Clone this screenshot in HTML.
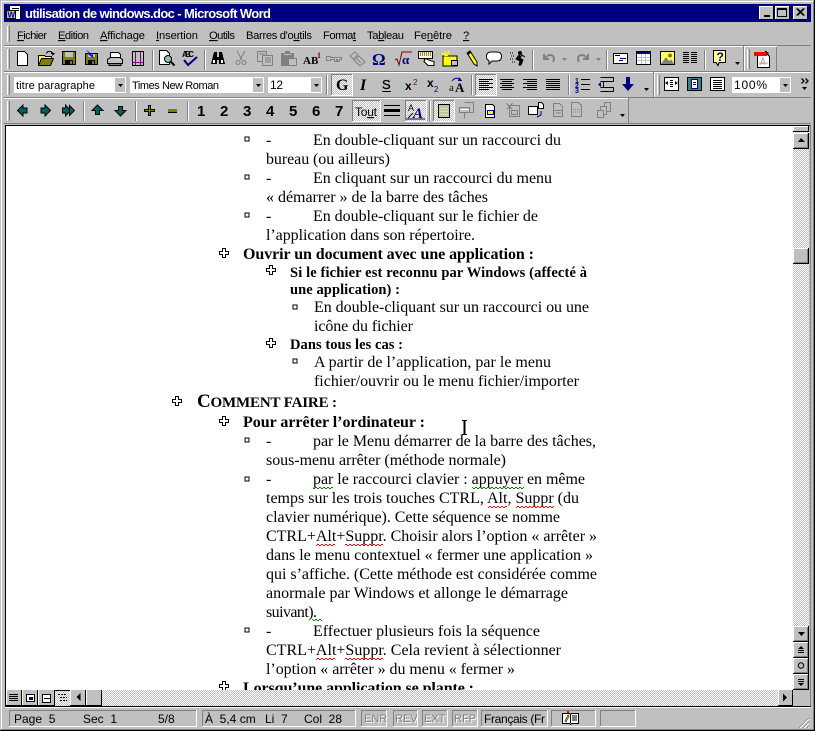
<!DOCTYPE html>
<html><head><meta charset="utf-8"><title>utilisation de windows.doc - Microsoft Word</title>
<style>
html,body{margin:0;padding:0;background:#c0c0c0;overflow:hidden}
svg{display:block}
text{white-space:pre}
.m{font:11.2px "Liberation Sans",sans-serif;fill:#000}
.u{text-decoration:underline}
.d{font:16px "Liberation Serif",serif;fill:#000}
.b{font:bold 16px "Liberation Serif",serif;fill:#000}
.c{font:bold 14.5px "Liberation Serif",serif;fill:#000}
.s{font:12px "Liberation Sans",sans-serif;fill:#000}
.f{font:11px "Liberation Sans",sans-serif;fill:#000}
.g{font:11px "Liberation Sans",sans-serif;fill:#808080}
.gw{font:11px "Liberation Sans",sans-serif;fill:#fff}
.n{font:bold 15px "Liberation Sans",sans-serif;fill:#000}
</style></head><body>
<svg xmlns="http://www.w3.org/2000/svg" width="815" height="731" viewBox="0 0 815 731" shape-rendering="crispEdges">
<defs>
<pattern id="dw" width="2" height="2" patternUnits="userSpaceOnUse"><rect width="2" height="2" fill="#c0c0c0"/><rect width="1" height="1" fill="#fff"/><rect x="1" y="1" width="1" height="1" fill="#fff"/></pattern>
<pattern id="zr" width="4" height="2" patternUnits="userSpaceOnUse"><rect x="0" y="1" width="1" height="1" fill="#f00"/><rect x="1" y="0" width="2" height="1" fill="#f00"/><rect x="3" y="1" width="1" height="1" fill="#f00"/></pattern>
<pattern id="zg" width="4" height="2" patternUnits="userSpaceOnUse"><rect x="0" y="1" width="1" height="1" fill="#080"/><rect x="1" y="0" width="2" height="1" fill="#080"/><rect x="3" y="1" width="1" height="1" fill="#080"/></pattern>
<path id="plus" d="M-1.5-4.5h3v3h3v3h-3v3h-3v-3h-3v-3h3z" fill="#fff" stroke="#000"/>
<rect id="sq" x="-2" y="-2" width="4" height="4" fill="#fff" stroke="#000"/>
<path id="ar" d="M0 0h5l-2.500 3z" fill="#000" shape-rendering="auto"/>
</defs>
<rect width="815" height="731" fill="#c0c0c0"/>
<rect x="1" y="1" width="812" height="1" fill="#fff"/><rect x="1" y="1" width="1" height="728" fill="#fff"/>
<rect x="813" y="1" width="1" height="729" fill="#808080"/><rect x="1" y="729" width="813" height="1" fill="#808080"/>
<rect x="814" width="1" height="731" fill="#000"/><rect y="730" width="815" height="1" fill="#000"/>

<!-- title bar -->
<rect x="4" y="4" width="807" height="18" fill="#000080"/>
<g transform="translate(6,5)"><rect x="3.500" y=".5" width="11" height="14" fill="#fff" stroke="#000"/><rect x="6" y="3" width="7" height="1" fill="#000"/><rect x="6" y="5" width="7" height="1" fill="#000"/><rect x=".5" y="5.500" width="9" height="8" fill="#c0c0c0" stroke="#000"/><text x="1.500" y="12.500" font-family="Liberation Sans" font-size="8" font-weight="bold" fill="#000080">W</text></g>
<text x="25" y="18" font-family="Liberation Sans" font-weight="bold" font-size="13" fill="#fff" textLength="246">utilisation de windows.doc - Microsoft Word</text>
<g id="wb">
<rect x="759" y="6" width="15" height="14" fill="#c0c0c0"/><rect x="759" y="6" width="15" height="1" fill="#fff"/><rect x="759" y="6" width="1" height="14" fill="#fff"/><rect x="759" y="19" width="15" height="1" fill="#000"/><rect x="773" y="6" width="1" height="14" fill="#000"/><rect x="764" y="15" width="6" height="2" fill="#000"/>
<rect x="775" y="6" width="15" height="14" fill="#c0c0c0"/><rect x="775" y="6" width="15" height="1" fill="#fff"/><rect x="775" y="6" width="1" height="14" fill="#fff"/><rect x="775" y="19" width="15" height="1" fill="#000"/><rect x="789" y="6" width="1" height="14" fill="#000"/><rect x="777.500" y="8.500" width="9" height="8" fill="none" stroke="#000"/><rect x="777" y="8" width="10" height="2" fill="#000"/>
<rect x="793" y="6" width="15" height="14" fill="#c0c0c0"/><rect x="793" y="6" width="15" height="1" fill="#fff"/><rect x="793" y="6" width="1" height="14" fill="#fff"/><rect x="793" y="19" width="15" height="1" fill="#000"/><rect x="807" y="6" width="1" height="14" fill="#000"/><path d="M796.500 8.500l7 7M797.500 8.500l7 7M803.500 8.500l-7 7M804.500 8.500l-7 7" stroke="#000" shape-rendering="auto"/>
</g>

<!-- bevels -->
<rect x="4" y="22" width="807" height="1" fill="#c0c0c0"/>
<rect x="4" y="45" width="807" height="1" fill="#808080"/><rect x="4" y="46" width="807" height="1" fill="#fff"/>
<rect x="4" y="71" width="807" height="1" fill="#808080"/><rect x="4" y="72" width="807" height="1" fill="#fff"/>
<rect x="4" y="97" width="807" height="1" fill="#808080"/><rect x="4" y="98" width="624" height="1" fill="#fff"/>
<rect x="4" y="123" width="807" height="1" fill="#808080"/>
<rect x="743" y="46" width="1" height="25" fill="#808080"/><rect x="744" y="47" width="1" height="24" fill="#fff"/>
<rect x="776" y="47" width="1" height="24" fill="#808080"/><rect x="777" y="46" width="34" height="25" fill="#c0c0c0"/><rect x="777" y="45" width="34" height="1" fill="#808080"/><rect x="777" y="46" width="34" height="1" fill="#c0c0c0"/>
<rect x="653" y="72" width="1" height="25" fill="#808080"/><rect x="654" y="73" width="1" height="24" fill="#fff"/>
<rect x="628" y="98" width="1" height="25" fill="#808080"/>
<!-- grippers -->
<g fill="#fff"><rect x="7" y="26" width="1" height="16"/><rect x="7" y="49" width="1" height="20"/><rect x="7" y="75" width="1" height="20"/><rect x="7" y="101" width="1" height="20"/><rect x="747" y="49" width="1" height="20"/><rect x="657" y="75" width="1" height="20"/></g>
<g fill="#808080"><rect x="9" y="26" width="1" height="16"/><rect x="9" y="49" width="1" height="20"/><rect x="9" y="75" width="1" height="20"/><rect x="9" y="101" width="1" height="20"/><rect x="749" y="49" width="1" height="20"/><rect x="659" y="75" width="1" height="20"/></g>

<!-- menu -->
<g class="mn">
<text class="m" x="17" y="39" textLength="30"><tspan class="u">F</tspan>ichier</text>
<text class="m" x="58" y="39" textLength="31"><tspan class="u">E</tspan>dition</text>
<text class="m" x="100" y="39" textLength="45"><tspan class="u">A</tspan>ffichage</text>
<text class="m" x="156" y="39" textLength="42"><tspan class="u">I</tspan>nsertion</text>
<text class="m" x="209" y="39" textLength="26"><tspan class="u">O</tspan>utils</text>
<text class="m" x="246" y="39" textLength="66">Barres d'o<tspan class="u">u</tspan>tils</text>
<text class="m" x="323" y="39" textLength="33">Forma<tspan class="u">t</tspan></text>
<text class="m" x="367" y="39" textLength="37">Ta<tspan class="u">b</tspan>leau</text>
<text class="m" x="414" y="39" textLength="38">Fe<tspan class="u">n</tspan>être</text>
<text class="m" x="463" y="39"><tspan class="u">?</tspan></text>
</g>

<!-- toolbar 1 separators -->
<g fill="#808080"><rect x="152" y="50" width="1" height="20"/><rect x="204" y="50" width="1" height="20"/><rect x="532" y="50" width="1" height="20"/><rect x="606" y="50" width="1" height="20"/><rect x="704" y="50" width="1" height="20"/></g>
<g fill="#fff"><rect x="153" y="50" width="1" height="20"/><rect x="205" y="50" width="1" height="20"/><rect x="533" y="50" width="1" height="20"/><rect x="607" y="50" width="1" height="20"/><rect x="705" y="50" width="1" height="20"/></g>

<!-- toolbar 1 icons -->
<path transform="translate(17,51)" d="M.5.5h7l3 3v11H.5z" fill="#fff" stroke="#000"/>
<g transform="translate(38,50)"><path d="M.5 15.500V5.500h6l1 1h6v2" fill="#ffff99" stroke="#000"/><path d="M.5 15.500l3-7h12l-3 7z" fill="#808000" stroke="#000"/><path d="M1 6h5v2H3l-2 5z" fill="#ff0"/><path d="M8 3.500l2-2h3l2 2M13 3.500h3l-2 2" fill="none" stroke="#000"/></g>
<g transform="translate(62,51)"><rect x=".5" y=".5" width="13" height="13" fill="#808000" stroke="#000"/><rect x="3" y="1" width="8" height="5" fill="#c0c0c0"/><rect x="3" y="9" width="8" height="5" fill="#000"/><rect x="8" y="10" width="2" height="3" fill="#808000"/></g>
<g transform="translate(85,51)"><rect x=".5" y="2.500" width="12" height="11" fill="#808000" stroke="#000"/><rect x="3" y="9" width="7" height="5" fill="#000"/><rect x="7" y="10" width="2" height="3" fill="#808000"/><rect x="3" y="3" width="7" height="3" fill="#c0c0c0"/><path d="M1-1l4 4-2 0 5 4V3l-1 1-4-4z" fill="#00f" shape-rendering="auto"/></g>
<g transform="translate(107,51)"><path d="M3.500 6.500V1.500h8l2 2v3" fill="#fff" stroke="#000"/><path d="M.5 8.500l3-2h9l3 2v4h-15z" fill="#c0c0c0" stroke="#000"/><rect x="11" y="8" width="3" height="1" fill="#ff0"/><rect x="2" y="12.500" width="12" height="2" fill="#808080" stroke="#000"/></g>
<g transform="translate(132,51)"><rect x=".5" y=".5" width="11" height="14" fill="#c0c0c0" stroke="#000"/><path d="M3.500 1v13M8.500 1v13M1 11.500h10" stroke="#800080" fill="none"/></g>
<g transform="translate(159,50)"><path d="M.5.5h7l3 3v11H.5z" fill="#fff" stroke="#000"/><circle cx="9" cy="9" r="3.500" fill="#8fc0c0" stroke="#000" shape-rendering="auto"/><path d="M11.500 11.500l4 4" stroke="#000" stroke-width="2" shape-rendering="auto"/></g>
<g transform="translate(182,50)"><text x="0" y="7" font-family="Liberation Sans" font-size="8" font-weight="bold" fill="#000" textLength="12">ABC</text><path d="M2 10l4 5L15 7" fill="none" stroke="#000080" stroke-width="2" shape-rendering="auto"/></g>
<g transform="translate(210,51)"><path d="M4 1h3v5h2V1h3l3 12h-6V9H7v4H1z" fill="#000"/><rect x="3" y="9" width="2" height="3" fill="#fff"/><rect x="11" y="9" width="2" height="3" fill="#fff"/></g>
<g transform="translate(233,50)" stroke="#808080" fill="none" shape-rendering="auto"><path d="M4 1l5 9M12 1L7 10"/><circle cx="5" cy="12.500" r="2"/><circle cx="11" cy="12.500" r="2"/></g>
<g transform="translate(257,51)"><rect x=".5" y=".5" width="9" height="10" fill="#c0c0c0" stroke="#808080"/><rect x="5.500" y="4.500" width="10" height="10" fill="#c0c0c0" stroke="#808080"/><path d="M8 7h6M8 9h6M8 11h6M2 3h6" stroke="#808080"/></g>
<g transform="translate(280,50)"><rect x="1" y="3" width="13" height="13" fill="#808080"/><rect x="5" y="1" width="5" height="3" fill="#808080"/><rect x="8.500" y="8.500" width="8" height="7" fill="#c0c0c0" stroke="#808080"/><rect x="4" y="4" width="7" height="1" fill="#c0c0c0"/></g>
<g transform="translate(303,52)"><text x="0" y="12" font-family="Liberation Serif" font-weight="bold" font-size="11" fill="#000">AB</text><text x="14" y="6" font-family="Liberation Serif" font-weight="bold" font-size="8" fill="#800000">1</text></g>
<path transform="translate(326,55)" d="M.5 1.500h4v1h11v2h-2v2h-2v-2h-1v2h-2v-2h-4v1h-4z" fill="#c0c0c0" stroke="#808080"/>
<g transform="translate(349,51)" stroke="#808080" fill="#c0c0c0" shape-rendering="auto"><path d="M1 5l5-4 3 3-5 4z"/><path d="M5 9l5-4 6 6-5 4z"/><path d="M8 8l4 4" fill="none"/></g>
<text x="372" y="65" font-family="Liberation Serif" font-weight="bold" font-size="17" fill="#000080">Ω</text>
<g transform="translate(395,51)"><path d="M0 9l2-1 2 6 3-13h10" fill="none" stroke="#800000" shape-rendering="auto"/><text x="7" y="13" font-family="Liberation Serif" font-weight="bold" font-size="13" fill="#000080">α</text></g>
<g transform="translate(418,50)"><path d="M.5 1.500h14v7h-14z" fill="#ffffc0" stroke="#000"/><path d="M2 3h1M4 3h1M6 3h1M8 3h1M10 3h1M12 3h1M2 5h1M4 5h1M6 5h1M8 5h1M10 5h1M12 5h1" stroke="#000" stroke-width="1" fill="none"/><path d="M7 8.500l5 2 4 1v4H10l-4-4z" fill="#fff" stroke="#000"/></g>
<g transform="translate(442,50)"><rect x="1" y="6" width="14" height="10" fill="#ffff00" stroke="#000"/><rect x="9.500" y="10.500" width="6" height="5" fill="#c0c0c0" stroke="#000"/><path d="M3 1l1 5M0 3l4 3M7 1L5 6" stroke="#ffff00" stroke-width="1.500" shape-rendering="auto"/></g>
<g transform="translate(464,50)" shape-rendering="auto"><path d="M3 3l3-2 7 11 0 4-3-2z" fill="#ffff00" stroke="#000"/><path d="M3 3l3-2 1 2-3 2z" fill="#000"/></g>
<path transform="translate(486,51)" d="M5 1h6q4.500 0 4.500 4.500T11 10H6l-3 3 0-3.500Q.5 9 .5 5.500 .5 1 5 1z" fill="#fff" stroke="#000" shape-rendering="auto"/>
<g transform="translate(510,50)" shape-rendering="auto"><circle cx="10" cy="3" r="2" fill="#000"/><path d="M9 5l-3 4 4 2-1 4h2l2-5-3-2 2-3 3 2" fill="#000" stroke="#000"/><path d="M0 3h3M1 6h3M0 9h3M2 12h3" stroke="#000" stroke-dasharray="1 1"/></g>
<g transform="translate(541,52)" fill="none" stroke="#808080" stroke-width="2" shape-rendering="auto"><path d="M3 2v5h5M3 7q5-6 9-3 2 2 0 6"/></g>
<path d="M562 58h5l-2.500 3z" fill="#808080" shape-rendering="auto"/>
<g transform="translate(575,52)" fill="none" stroke="#808080" stroke-width="2" shape-rendering="auto"><path d="M13 2v5H8M13 7q-5-6-9-3-2 2 0 6"/></g>
<path d="M596 58h5l-2.500 3z" fill="#808080" shape-rendering="auto"/>
<g transform="translate(613,50)"><rect x=".5" y="3.500" width="14" height="10" fill="#fff" stroke="#000"/><rect x="7" y="8" width="6" height="1" fill="#000080"/><rect x="6" y="10" width="4" height="1" fill="#000080"/><rect x="2" y="5" width="5" height="1" fill="#000"/></g>
<g transform="translate(636,51)"><rect x=".5" y=".5" width="14" height="13" fill="#fff" stroke="#000"/><rect x="1" y="1" width="13" height="2" fill="#000080"/><path d="M5.500 3v10M9.500 3v10M1 6.500h13M1 9.500h13" stroke="#c0c0c0" fill="none"/></g>
<g transform="translate(660,51)"><rect x=".5" y=".5" width="14" height="13" fill="#ffff66" stroke="#000"/><circle cx="10" cy="4.500" r="2" fill="#808000" shape-rendering="auto"/><path d="M1 13l5-7 3 4 2-2 3 5z" fill="#808080"/></g>
<g transform="translate(683,51)" fill="#000"><rect x="0" y="1" width="6" height="1"/><rect x="8" y="1" width="6" height="1"/><rect x="0" y="3" width="6" height="1"/><rect x="8" y="3" width="6" height="1"/><rect x="0" y="5" width="6" height="1"/><rect x="8" y="5" width="6" height="1"/><rect x="0" y="7" width="6" height="1"/><rect x="8" y="7" width="6" height="1"/><rect x="0" y="9" width="6" height="1"/><rect x="8" y="9" width="6" height="1"/><rect x="0" y="11" width="6" height="1"/><rect x="8" y="11" width="6" height="1"/></g>
<g transform="translate(713,50)"><path d="M.5.5h12v12H6l-1 3-2-3H.5z" fill="#ffff99" stroke="#000"/><text x="3.500" y="11" font-family="Liberation Sans" font-weight="bold" font-size="12" fill="#000080">?</text></g>
<use href="#ar" x="735" y="62"/>
<g transform="translate(754,50)"><path d="M3.500 3.500h9l3 3v11h-12z" fill="#fff" stroke="#000"/><rect x="0" y="2" width="13" height="4" fill="#f00"/><path d="M11 1l3 2v2" stroke="#000" fill="none"/><path d="M6 15l3-7 2 6-6-1h9" stroke="#c0a0a0" fill="none" shape-rendering="auto"/></g>

<!-- toolbar 2 -->
<g>
<rect x="14" y="77" width="112" height="16" fill="#fff"/><rect x="115" y="78" width="10" height="14" fill="#c0c0c0"/><use href="#ar" x="118" y="84"/>
<text class="f" x="16" y="89" textLength="79">titre paragraphe</text>
<rect x="130" y="77" width="134" height="16" fill="#fff"/><rect x="253" y="78" width="10" height="14" fill="#c0c0c0"/><use href="#ar" x="256" y="84"/>
<text class="f" x="132" y="89" textLength="87">Times New Roman</text>
<rect x="268" y="77" width="54" height="16" fill="#fff"/><rect x="311" y="78" width="10" height="14" fill="#c0c0c0"/><use href="#ar" x="314" y="84"/>
<text class="s" x="270" y="89" textLength="13">12</text>
</g>
<rect x="326" y="75" width="1" height="20" fill="#808080"/><rect x="327" y="75" width="1" height="20" fill="#fff"/>
<rect x="331" y="74" width="22" height="22" fill="url(#dw)"/><rect x="331" y="74" width="22" height="1" fill="#808080"/><rect x="331" y="74" width="1" height="22" fill="#808080"/><rect x="352" y="74" width="1" height="22" fill="#fff"/><rect x="331" y="95" width="22" height="1" fill="#fff"/>
<text x="336" y="90" font-family="Liberation Serif" font-weight="bold" font-size="16" fill="#000">G</text>
<text x="360" y="90" font-family="Liberation Serif" font-weight="bold" font-style="italic" font-size="16" fill="#000">I</text>
<text x="382" y="89" font-family="Liberation Sans" font-weight="normal" font-size="13" fill="#000" stroke="#000" stroke-width=".3">S</text><rect x="382" y="91" width="9" height="1" fill="#000"/>
<text x="405" y="90" font-family="Liberation Sans" font-weight="bold" font-size="12" fill="#000">x</text><text x="413" y="85" font-family="Liberation Sans" font-size="8" fill="#800000">2</text>
<text x="427" y="87" font-family="Liberation Sans" font-weight="bold" font-size="12" fill="#000">x</text><text x="434" y="92" font-family="Liberation Sans" font-size="8" fill="#000080">2</text>
<g transform="translate(449,76)"><text x="0" y="15" font-family="Liberation Serif" font-size="11" fill="#000">a</text><text x="6" y="16" font-family="Liberation Serif" font-weight="bold" font-size="13" fill="#000">A</text><path d="M3 5Q7 0 12 4" fill="none" stroke="#000080" shape-rendering="auto"/><path d="M10 1l3 4-4 0z" fill="#000080"/></g>
<rect x="471" y="75" width="1" height="20" fill="#808080"/><rect x="472" y="75" width="1" height="20" fill="#fff"/>
<rect x="475" y="74" width="22" height="22" fill="url(#dw)"/><rect x="475" y="74" width="22" height="1" fill="#808080"/><rect x="475" y="74" width="1" height="22" fill="#808080"/><rect x="496" y="74" width="1" height="22" fill="#fff"/><rect x="475" y="95" width="22" height="1" fill="#fff"/>
<g fill="#000"><rect x="479" y="79" width="14" height="1"/><rect x="479" y="81" width="10" height="1"/><rect x="479" y="83" width="14" height="1"/><rect x="479" y="85" width="10" height="1"/><rect x="479" y="87" width="14" height="1"/><rect x="479" y="89" width="10" height="1"/>
<rect x="500" y="79" width="14" height="1"/><rect x="502" y="81" width="10" height="1"/><rect x="500" y="83" width="14" height="1"/><rect x="502" y="85" width="10" height="1"/><rect x="500" y="87" width="14" height="1"/><rect x="502" y="89" width="10" height="1"/>
<rect x="523" y="79" width="14" height="1"/><rect x="527" y="81" width="10" height="1"/><rect x="523" y="83" width="14" height="1"/><rect x="527" y="85" width="10" height="1"/><rect x="523" y="87" width="14" height="1"/><rect x="527" y="89" width="10" height="1"/>
<rect x="546" y="79" width="14" height="1"/><rect x="546" y="81" width="14" height="1"/><rect x="546" y="83" width="14" height="1"/><rect x="546" y="85" width="14" height="1"/><rect x="546" y="87" width="14" height="1"/><rect x="546" y="89" width="14" height="1"/></g>
<rect x="568" y="75" width="1" height="20" fill="#808080"/><rect x="569" y="75" width="1" height="20" fill="#fff"/>
<g fill="#000080"><text x="575" y="83" font-family="Liberation Sans" font-size="7" font-weight="bold" fill="#000080">1</text><text x="575" y="88" font-family="Liberation Sans" font-size="7" font-weight="bold" fill="#000080">2</text><text x="575" y="93" font-family="Liberation Sans" font-size="7" font-weight="bold" fill="#000080">3</text></g>
<g fill="#000"><rect x="581" y="79" width="9" height="1"/><rect x="581" y="84" width="9" height="1"/><rect x="581" y="89" width="9" height="1"/></g>
<g transform="translate(598,77)"><path d="M2.500.5h13M2.500 4.500h13M2.500 10.500h13M2.500 14.500h13M5.500 4.500v6M15.500.5v4M15.500 10.500v4" stroke="#000" fill="none"/><path d="M3 5v5L0 7.500z" fill="#000080" shape-rendering="auto"/></g>
<path d="M626 77h4v7h4l-6 7-6-7h4z" fill="#000080" shape-rendering="auto"/>
<use href="#ar" x="644" y="88"/>
<g transform="translate(664,77)"><rect x=".5" y=".5" width="14" height="13" fill="#fff" stroke="#000"/><rect x="6" y="3" width="3" height="1" fill="#000"/><rect x="6" y="5" width="3" height="1" fill="#000"/><rect x="6" y="7" width="3" height="1" fill="#000"/><rect x="6" y="9" width="3" height="1" fill="#000"/><path d="M4 4v4L1 6zM11 4v4l3-2z" fill="#000080" shape-rendering="auto"/></g>
<g transform="translate(687,77)"><rect x=".5" y=".5" width="14" height="13" fill="#408080" stroke="#000"/><rect x="4.500" y="2.500" width="6" height="9" fill="#fff" stroke="#000080"/><rect x="6" y="5" width="3" height="1" fill="#000080"/><rect x="6" y="7" width="3" height="1" fill="#000080"/></g>
<g transform="translate(710,77)"><rect x=".5" y=".5" width="14" height="13" fill="#fff" stroke="#000"/><path d="M3 3.500h9M3 5.500h9M3 7.500h9M3 9.500h9M3 11.500h9" stroke="#000"/></g>
<rect x="732" y="77" width="59" height="16" fill="#fff"/><rect x="780" y="78" width="10" height="14" fill="#c0c0c0"/><use href="#ar" x="783" y="84"/>
<text class="s" x="734" y="89" textLength="33">100%</text>
<path d="M801.500 78.500l2.500 2.500-2.500 2.500M805.500 78.500l2.500 2.500-2.500 2.500" fill="none" stroke="#000" stroke-width="1.300" shape-rendering="auto"/><use href="#ar" x="802" y="87"/>

<!-- toolbar 3 -->
<g fill="#006060" stroke="#000" shape-rendering="auto">
<path d="M17.500 110.500l5.500-5.500v3h4v5h-4v3z"/>
<path d="M50.500 110.500l-5.500-5.500v3h-4v5h4v3z"/>
<path d="M62.500 108h3v-3l5 5.500-5 5.500v-3h-3z"/>
<path d="M69.500 105.500l5 5-5 5z"/>
<path d="M97.500 105l-5.500 5.500h3.500v4h4v-4h3.500z"/>
<path d="M120.500 116l-5.500-5.500h3.500v-4h4v4h3.500z"/>
</g>
<path d="M148 105h3v4h4v3h-4v4h-3v-4h-4v-3h4z" fill="#000"/><path d="M149 106h1v4h4v1h-4v4h-1v-4h-4v-1h4z" fill="#808000"/>
<rect x="168" y="109" width="9" height="3" fill="#808000"/><rect x="168" y="112" width="9" height="1" fill="#000"/>
<g><rect x="83" y="101" width="1" height="20" fill="#808080"/><rect x="84" y="101" width="1" height="20" fill="#fff"/><rect x="135" y="101" width="1" height="20" fill="#808080"/><rect x="136" y="101" width="1" height="20" fill="#fff"/><rect x="187" y="101" width="1" height="20" fill="#808080"/><rect x="188" y="101" width="1" height="20" fill="#fff"/></g>
<text class="n" x="197" y="116">1</text><text class="n" x="220" y="116">2</text><text class="n" x="243" y="116">3</text><text class="n" x="266" y="116">4</text><text class="n" x="289" y="116">5</text><text class="n" x="312" y="116">6</text><text class="n" x="335" y="116">7</text>
<rect x="352" y="100" width="29" height="22" fill="url(#dw)"/><rect x="352" y="100" width="29" height="1" fill="#808080"/><rect x="352" y="100" width="1" height="22" fill="#808080"/><rect x="380" y="100" width="1" height="22" fill="#fff"/><rect x="352" y="121" width="29" height="1" fill="#fff"/>
<text class="s" x="355" y="116" textLength="22">To<tspan class="u">u</tspan>t</text>
<g fill="#000"><rect x="384" y="105" width="16" height="1"/><rect x="384" y="109" width="16" height="3"/><rect x="384" y="115" width="16" height="1"/></g>
<rect x="405" y="100" width="22" height="22" fill="url(#dw)"/><rect x="405" y="100" width="22" height="1" fill="#808080"/><rect x="405" y="100" width="1" height="22" fill="#808080"/><rect x="426" y="100" width="1" height="22" fill="#fff"/><rect x="405" y="121" width="22" height="1" fill="#fff"/>
<text x="408" y="111" font-family="Liberation Sans" font-size="9" fill="#000">A</text><text x="413" y="118" font-family="Liberation Serif" font-weight="bold" font-style="italic" font-size="15" fill="#000080">A</text><path d="M406 119h19" stroke="#000080" stroke-width="1"/><path d="M408 118l5-5" stroke="#000" shape-rendering="auto"/>
<rect x="429" y="101" width="1" height="20" fill="#808080"/><rect x="430" y="101" width="1" height="20" fill="#fff"/>
<rect x="433" y="100" width="22" height="22" fill="url(#dw)"/><rect x="433" y="100" width="22" height="1" fill="#808080"/><rect x="433" y="100" width="1" height="22" fill="#808080"/><rect x="454" y="100" width="1" height="22" fill="#fff"/><rect x="433" y="121" width="22" height="1" fill="#fff"/>
<rect x="438.500" y="104.500" width="11" height="13" fill="#c0c0c0" stroke="#000"/><path d="M440 108.500h8M440 111.500h8M440 114.500h8" stroke="#e8e860"/>
<g fill="#c0c0c0" stroke="#808080"><path d="M464.500 102.500h9v10h-4M459.500 107.500h10v5h-10zM464.500 112.500v6"/><path d="M460.500 109.500h8" fill="none" stroke="#fff"/></g>
<g transform="translate(485,104)"><path d="M.5.5h7l2 2v11h-9z" fill="#fff" stroke="#000"/><rect x="2.500" y="6.500" width="6" height="4" fill="#ff0" stroke="#000080"/></g>
<g transform="translate(506,103)" fill="#c0c0c0" stroke="#808080"><rect x="3.500" y="2.500" width="10" height="11"/><path d="M.5.5l6 6M6.500.5l-6 6" fill="none"/><rect x="5.500" y="7.500" width="6" height="4" fill="none"/></g>
<g transform="translate(528,102)"><rect x=".5" y="4.500" width="9" height="8" fill="#fff" stroke="#000"/><path d="M10.500.5h3l2 2v4h-5z" fill="#fff" stroke="#000"/><path d="M13 9v4l-4 2" fill="none" stroke="#000080" shape-rendering="auto"/></g>
<g transform="translate(553,103)"><path d="M.5.5h6l3 3v10H.5z" fill="#c0c0c0" stroke="#808080"/><path d="M1 7.500h8M3 10h5" stroke="#808080"/></g>
<g transform="translate(571,102)"><path d="M.5.5h7l3 3v11H.5z" fill="#c0c0c0" stroke="#808080"/><path d="M2 7.500h7M2 10h7" stroke="#808080" stroke-dasharray="1 1"/></g>
<g transform="translate(597,102)" fill="#c0c0c0" stroke="#808080"><rect x="7.500" y=".5" width="6" height="9"/><rect x="3.500" y="4.500" width="6" height="8"/><rect x=".5" y="8.500" width="6" height="7"/></g>
<use href="#ar" x="620" y="114"/>

<!-- document -->
<rect x="5" y="125" width="805" height="1" fill="#000"/><rect x="5" y="125" width="1" height="581" fill="#000"/>
<rect x="6" y="126" width="787" height="564" fill="#fff"/>

<g>
<g fill="none"><use href="#sq" x="247" y="139"/><use href="#sq" x="247" y="177"/><use href="#sq" x="247" y="215"/><use href="#sq" x="295" y="307"/><use href="#sq" x="295" y="361"/><use href="#sq" x="247" y="440"/><use href="#sq" x="247" y="479"/><use href="#sq" x="247" y="630"/></g>
<use href="#plus" x="224" y="253"/><use href="#plus" x="271" y="270"/><use href="#plus" x="271" y="343"/><use href="#plus" x="177" y="401"/><use href="#plus" x="224" y="421"/><use href="#plus" x="224" y="686"/>
<text class="d" x="266" y="145">-</text><text class="d" x="266" y="183">-</text><text class="d" x="266" y="221">-</text><text class="d" x="266" y="446">-</text><text class="d" x="266" y="484">-</text><text class="d" x="266" y="636">-</text>
<text class="d" x="313" y="145" textLength="248">En double-cliquant sur un raccourci du</text>
<text class="d" x="266" y="164" textLength="124">bureau (ou ailleurs)</text>
<text class="d" x="313" y="183" textLength="239">En cliquant sur un raccourci du menu</text>
<text class="d" x="266" y="202" textLength="222">« démarrer » de la barre des tâches</text>
<text class="d" x="313" y="221" textLength="225">En double-cliquant sur le fichier de</text>
<text class="d" x="266" y="240" textLength="209">l’application dans son répertoire.</text>
<text class="b" x="243" y="259" textLength="291">Ouvrir un document avec une application :</text>
<text class="c" x="290" y="277" textLength="297">Si le fichier est reconnu par Windows (affecté à</text>
<text class="c" x="290" y="294" textLength="110">une application) :</text>
<text class="d" x="314" y="312" textLength="275">En double-cliquant sur un raccourci ou une</text>
<text class="d" x="314" y="331" textLength="99">icône du fichier</text>
<text class="c" x="290" y="349" textLength="113">Dans tous les cas :</text>
<text class="d" x="314" y="367" textLength="237">A partir de l’application, par le menu</text>
<text class="d" x="314" y="386" textLength="265">fichier/ouvrir ou le menu fichier/importer</text>
<text x="197" y="407" font-family="Liberation Serif" font-weight="bold" font-size="15" fill="#000" textLength="140"><tspan font-size="19">C</tspan>OMMENT FAIRE :</text>
<text class="b" x="243" y="427" textLength="182">Pour arrêter l’ordinateur :</text>
<text class="d" x="313" y="446" textLength="283">par le Menu démarrer de la barre des tâches,</text>
<text class="d" x="266" y="465" textLength="240">sous-menu arrêter (méthode normale)</text>
<text class="d" x="313" y="484" textLength="272">par le raccourci clavier : appuyer en même</text>
<text class="d" x="266" y="503" textLength="313">temps sur les trois touches CTRL, Alt, Suppr (du</text>
<text class="d" x="266" y="522" textLength="294">clavier numérique). Cette séquence se nomme</text>
<text class="d" x="266" y="541" textLength="331">CTRL+Alt+Suppr. Choisir alors l’option « arrêter »</text>
<text class="d" x="266" y="560" textLength="327">dans le menu contextuel « fermer une application »</text>
<text class="d" x="266" y="579" textLength="331">qui s’affiche. (Cette méthode est considérée comme</text>
<text class="d" x="266" y="598" textLength="302">anormale par Windows et allonge le démarrage</text>
<text class="d" x="266" y="617" textLength="51">suivant).</text>
<text class="d" x="313" y="636" textLength="227">Effectuer plusieurs fois la séquence</text>
<text class="d" x="266" y="655" textLength="295">CTRL+Alt+Suppr. Cela revient à sélectionner</text>
<text class="d" x="266" y="674" textLength="249">l’option « arrêter » du menu « fermer »</text>
<text class="b" x="243" y="693" textLength="231">Lorsqu’une application se plante :</text>
<rect x="313" y="487" width="20" height="2" fill="url(#zg)"/><rect x="472" y="487" width="52" height="2" fill="url(#zg)"/>
<rect x="488" y="506" width="19" height="2" fill="url(#zr)"/><rect x="516" y="506" width="38" height="2" fill="url(#zr)"/>
<rect x="316" y="544" width="19" height="2" fill="url(#zr)"/><rect x="345" y="544" width="38" height="2" fill="url(#zr)"/>
<rect x="312" y="619" width="10" height="2" fill="url(#zg)"/>
<rect x="316" y="658" width="19" height="2" fill="url(#zr)"/><rect x="345" y="658" width="38" height="2" fill="url(#zr)"/>
<path d="M462 420.500h2v14h-2M467 420.500h-2v14h2M464.500 421v13" fill="none" stroke="#000" stroke-width="1"/>
</g>

<!-- vertical scrollbar -->
<rect x="793" y="126" width="16" height="564" fill="url(#dw)"/>
<rect x="793" y="126" width="16" height="6" fill="#c0c0c0"/><rect x="793" y="126" width="16" height="1" fill="#fff"/><rect x="793" y="126" width="1" height="6" fill="#fff"/><rect x="793" y="131" width="16" height="1" fill="#000"/><rect x="808" y="126" width="1" height="6" fill="#000"/>
<g id="btns">
<rect x="793" y="133" width="16" height="16" fill="#c0c0c0"/><rect x="793" y="133" width="16" height="1" fill="#fff"/><rect x="793" y="133" width="1" height="16" fill="#fff"/><rect x="793" y="148" width="16" height="1" fill="#000"/><rect x="808" y="133" width="1" height="16" fill="#000"/><rect x="794" y="147" width="14" height="1" fill="#808080"/><rect x="807" y="134" width="1" height="14" fill="#808080"/><path d="M801 138l4 4h-7z" fill="#000" shape-rendering="auto"/>
<rect x="793" y="248" width="16" height="16" fill="#c0c0c0"/><rect x="793" y="248" width="16" height="1" fill="#fff"/><rect x="793" y="248" width="1" height="16" fill="#fff"/><rect x="793" y="263" width="16" height="1" fill="#000"/><rect x="808" y="248" width="1" height="16" fill="#000"/><rect x="794" y="262" width="14" height="1" fill="#808080"/><rect x="807" y="249" width="1" height="14" fill="#808080"/>
<rect x="793" y="626" width="16" height="16" fill="#c0c0c0"/><rect x="793" y="626" width="16" height="1" fill="#fff"/><rect x="793" y="626" width="1" height="16" fill="#fff"/><rect x="793" y="641" width="16" height="1" fill="#000"/><rect x="808" y="626" width="1" height="16" fill="#000"/><rect x="794" y="640" width="14" height="1" fill="#808080"/><rect x="807" y="627" width="1" height="14" fill="#808080"/><path d="M798 632h7l-3.500 4z" fill="#000" shape-rendering="auto"/>
<rect x="793" y="642" width="16" height="16" fill="#c0c0c0"/><rect x="793" y="642" width="16" height="1" fill="#fff"/><rect x="793" y="642" width="1" height="16" fill="#fff"/><rect x="793" y="657" width="16" height="1" fill="#000"/><rect x="808" y="642" width="1" height="16" fill="#000"/><rect x="794" y="656" width="14" height="1" fill="#808080"/><rect x="807" y="643" width="1" height="14" fill="#808080"/><path d="M801 646l3 3h-6zM798 650h6v1h-6zM798 652h6v1h-6z" fill="#000" shape-rendering="auto"/>
<rect x="793" y="658" width="16" height="16" fill="#c0c0c0"/><rect x="793" y="658" width="16" height="1" fill="#fff"/><rect x="793" y="658" width="1" height="16" fill="#fff"/><rect x="793" y="673" width="16" height="1" fill="#000"/><rect x="808" y="658" width="1" height="16" fill="#000"/><rect x="794" y="672" width="14" height="1" fill="#808080"/><rect x="807" y="659" width="1" height="14" fill="#808080"/><circle cx="801" cy="665.500" r="2.700" fill="none" stroke="#000" shape-rendering="auto"/>
<rect x="793" y="674" width="16" height="16" fill="#c0c0c0"/><rect x="793" y="674" width="16" height="1" fill="#fff"/><rect x="793" y="674" width="1" height="16" fill="#fff"/><rect x="793" y="689" width="16" height="1" fill="#000"/><rect x="808" y="674" width="1" height="16" fill="#000"/><rect x="794" y="688" width="14" height="1" fill="#808080"/><rect x="807" y="675" width="1" height="14" fill="#808080"/><path d="M798 679h6v1h-6zM798 681h6v1h-6zM798 683h6l-3 3z" fill="#000" shape-rendering="auto"/>
</g>
<rect x="810" y="125" width="1" height="583" fill="#808080"/>

<!-- horizontal scrollbar -->
<rect x="6" y="690" width="787" height="16" fill="url(#dw)"/>
<rect x="793" y="690" width="17" height="16" fill="#c0c0c0"/>
<g>
<rect x="6" y="690" width="96" height="16" fill="#c0c0c0"/>
<g fill="#fff"><rect x="6" y="690" width="1" height="15"/><rect x="22" y="690" width="1" height="15"/><rect x="38" y="690" width="1" height="15"/><rect x="70" y="690" width="1" height="15"/><rect x="86" y="690" width="1" height="15"/></g>
<g fill="#000"><rect x="21" y="690" width="1" height="16"/><rect x="37" y="690" width="1" height="16"/><rect x="69" y="690" width="1" height="16"/><rect x="85" y="690" width="1" height="16"/><rect x="101" y="690" width="1" height="16"/><rect x="6" y="705" width="96" height="1"/></g>
<rect x="54" y="690" width="16" height="16" fill="url(#dw)"/><rect x="54" y="690" width="1" height="16" fill="#000"/><rect x="54" y="690" width="16" height="1" fill="#000"/>
<path d="M9 694.500h9M9 696.500h9M9 698.500h9M9 700.500h9" stroke="#000"/>
<rect x="26.500" y="694.500" width="8" height="7" fill="#fff" stroke="#000"/><rect x="29" y="697" width="4" height="3" fill="#000080"/>
<rect x="42.500" y="694.500" width="8" height="8" fill="#fff" stroke="#000"/><path d="M44 698.500h6" stroke="#000"/>
<path d="M58 694.500h9M60 697.500h7M60 700.500h7" stroke="#000" stroke-dasharray="2 1"/>
<path d="M80.500 693v8l-4-4z" fill="#000" shape-rendering="auto"/>
</g>
<rect x="778" y="690" width="15" height="16" fill="#c0c0c0"/><rect x="778" y="690" width="1" height="16" fill="#fff"/><rect x="778" y="705" width="15" height="1" fill="#000"/><rect x="792" y="690" width="1" height="16" fill="#000"/><path d="M783 693.500v8l4-4z" fill="#000" shape-rendering="auto"/>
<rect x="5" y="706" width="806" height="1" fill="#000"/><rect x="5" y="707" width="806" height="1" fill="#fff"/>

<!-- status bar -->
<g fill="none">
<path d="M9.500 726V710.500H196" stroke="#808080"/><path d="M196.500 710V726.500H9" stroke="#fff"/>
<path d="M202.500 726V710.500H355" stroke="#808080"/><path d="M355.500 710V726.500H202" stroke="#fff"/>
<path d="M361.500 726V710.500H386" stroke="#808080"/><path d="M386.500 710V726.500H361" stroke="#fff"/>
<path d="M393.500 726V710.500H417" stroke="#808080"/><path d="M417.500 710V726.500H393" stroke="#fff"/>
<path d="M422.500 726V710.500H447" stroke="#808080"/><path d="M447.500 710V726.500H422" stroke="#fff"/>
<path d="M452.500 726V710.500H477" stroke="#808080"/><path d="M477.500 710V726.500H452" stroke="#fff"/>
<path d="M481.500 726V710.500H547" stroke="#808080"/><path d="M547.500 710V726.500H481" stroke="#fff"/>
<path d="M551.500 726V710.500H595" stroke="#808080"/><path d="M595.500 710V726.500H551" stroke="#fff"/>
<path d="M600.500 726V710.500H635" stroke="#808080"/><path d="M635.500 710V726.500H600" stroke="#fff"/>
</g>
<text class="s" x="14" y="723">Page  5</text><text class="s" x="83" y="723">Sec  1</text><text class="s" x="158" y="723">5/8</text>
<text class="s" x="205" y="723">À  5,4 cm</text><text class="s" x="265" y="723">Li  7</text><text class="s" x="304" y="723">Col  28</text>
<text class="gw" x="365" y="723">ENR</text><text class="gw" x="396" y="723">REV</text><text class="gw" x="425" y="723">EXT</text><text class="gw" x="455" y="723">RFP</text>
<text class="g" x="364" y="722">ENR</text><text class="g" x="395" y="722">REV</text><text class="g" x="424" y="722">EXT</text><text class="g" x="454" y="722">RFP</text>
<text class="s" x="484" y="723" textLength="61">Français (Fr</text>
<g transform="translate(562,711)"><path d="M.5 12.500V2.500h7l1 1 1-1h7v10h-7l-1 1-1-1z" fill="#fff" stroke="#000"/><path d="M8.500 3v9" stroke="#000"/><path d="M3 10l3-6 1 1-3 6z" fill="#ff0" stroke="#000" stroke-width=".6" shape-rendering="auto"/><rect x="5" y="0" width="2" height="2" fill="#f00"/><path d="M10 5h5M10 7h5M10 9h5" stroke="#000"/></g>
<g stroke-width="1" shape-rendering="auto"><path d="M799 728l10-10M803 728l6-6M807 728l2-2" stroke="#808080"/><path d="M800 728l9-9M804 728l5-5M808 728l1-1" stroke="#fff"/></g>
</svg>
</body></html>
